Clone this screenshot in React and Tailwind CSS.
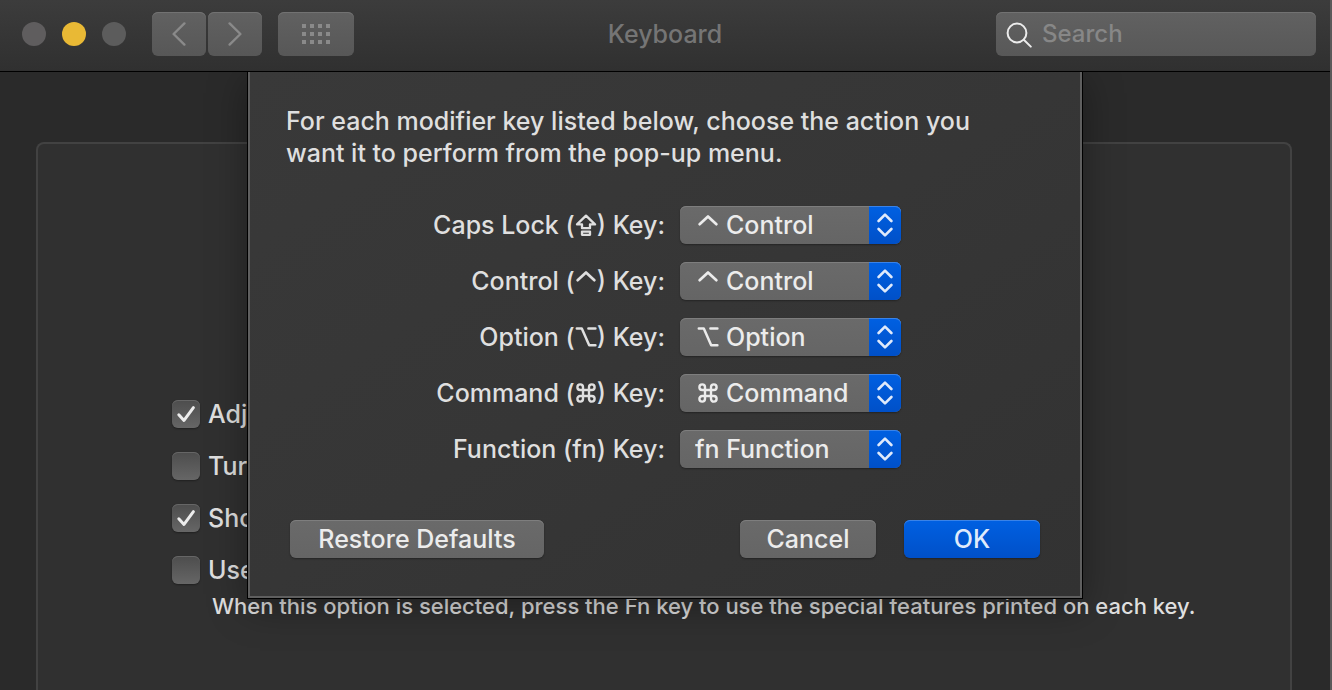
import { useState } from "react";

const stroke = {
  fill: "none",
  stroke: "currentColor",
  strokeLinecap: "round",
  strokeLinejoin: "round",
};

function Glyph({ name, className = "" }) {
  return (
    <svg viewBox="0 0 22 22" className={`h-[22px] w-[22px] ${className}`} aria-hidden="true" {...stroke}>
      {name === "caps" && (
        <g strokeWidth="2.3">
          <path d="M11 1.6 20 10.4H15V14.2H7V10.4H2Z" />
          <rect x="7" y="17.6" width="8" height="3.2" />
        </g>
      )}
      {name === "control" && <path strokeWidth="2.7" d="M2.6 10.2 11 2.4 19.4 10.2" />}
      {name === "option" && (
        <path strokeWidth="2.5" d="M1.8 2.6H6.8L14.2 19.2H20.4M13.4 2.6H20.4" />
      )}
      {name === "command" && (
        <path
          strokeWidth="2.4"
          d="M8 8H14V14H8ZM8 8H5.2A2.8 2.8 0 1 1 8 5.2ZM14 8V5.2A2.8 2.8 0 1 1 16.8 8ZM14 14H16.8A2.8 2.8 0 1 1 14 16.8ZM8 14V16.8A2.8 2.8 0 1 1 5.2 14Z"
        />
      )}
    </svg>
  );
}

const actions = [
  { id: "caps", label: "Caps Lock" },
  { id: "control", label: "Control" },
  { id: "option", label: "Option" },
  { id: "command", label: "Command" },
  { id: "function", label: "fn Function" },
];

const keys = [
  { id: "caps", name: "Caps Lock", action: "control" },
  { id: "control", name: "Control", action: "control" },
  { id: "option", name: "Option", action: "option" },
  { id: "command", name: "Command", action: "command" },
  { id: "function", name: "Function", action: "function" },
];

const settings = [
  { id: "brightness", label: "Adj", title: "Adjust keyboard brightness in low light", on: true },
  { id: "backlight", label: "Turn", title: "Turn keyboard backlight off after inactivity", on: false },
  { id: "viewers", label: "Show", title: "Show keyboard and emoji viewers in menu bar", on: true },
  { id: "fkeys", label: "Use", title: "Use F1, F2, etc. keys as standard function keys", on: false },
];

function ModifierRow({ item }) {
  const [value, setValue] = useState(item.action);
  const isFn = value === "function";
  return (
    <div className="grid grid-cols-[379px_221px] items-center gap-[15px]">
      <label htmlFor={`key-${item.id}`} className="flex items-center justify-end whitespace-pre">
        {item.name} (
        {item.id === "function" ? "fn" : <Glyph name={item.id} />}
        ) Key:
      </label>
      <div className="relative h-[38px] text-[#ececec]">
        <select
          id={`key-${item.id}`}
          value={value}
          onChange={(e) => setValue(e.target.value)}
          className={`h-full w-full appearance-none rounded-md bg-linear-to-b from-[#6a6a6a] to-[#656565] shadow-[0_1px_2px_rgba(0,0,0,0.35),inset_0_1px_0_#7e7e7e] outline-none ${isFn ? "pl-[15px]" : "pl-[46px]"}`}
        >
          {actions.map((a) => (
            <option key={a.id} value={a.id}>
              {a.label}
            </option>
          ))}
        </select>
        {!isFn && <Glyph name={value} className="pointer-events-none absolute top-2 left-[17px]" />}
        <span className="pointer-events-none absolute top-0 right-0 flex h-full w-8 items-center justify-center rounded-r-md bg-linear-to-b from-[#0060e2] to-[#0050c8] text-[#dfeafb] shadow-[inset_0_1px_0_#3a83e8]">
          <svg viewBox="0 0 16 26" className="h-[26px] w-4" strokeWidth="2.6" aria-hidden="true" {...stroke}>
            <path d="M1.6 9 8 2.6 14.4 9M1.6 17 8 23.4 14.4 17" />
          </svg>
        </span>
      </div>
    </div>
  );
}

function Setting({ item }) {
  const [on, setOn] = useState(item.on);
  return (
    <label className="flex h-7 items-center gap-2 whitespace-nowrap">
      <span className="relative size-7 shrink-0">
        <input
          type="checkbox"
          aria-label={item.title}
          checked={on}
          onChange={() => setOn(!on)}
          className="block size-7 appearance-none rounded-md bg-linear-to-b from-[#4d4d4d] to-[#666666] shadow-[0_1px_2px_rgba(0,0,0,0.35),inset_0_1px_0_#666666]"
        />
        {on && (
          <svg viewBox="0 0 28 28" className="pointer-events-none absolute inset-0 size-7 text-[#ececec]" strokeWidth="3" aria-hidden="true" {...stroke}>
            <path d="M6.8 14.8 12 20.4 21.4 7.6" />
          </svg>
        )}
      </span>
      {item.label}
    </label>
  );
}

const navButton =
  "flex h-11 items-center justify-center rounded-md bg-linear-to-b from-[#616161] to-[#575757] text-[#8a8a8a] shadow-[inset_0_1px_0_#727272]";
const pushButton =
  "h-[38px] rounded-md bg-linear-to-b from-[#6a6a6a] to-[#656565] text-[#ececec] shadow-[0_1px_2px_rgba(0,0,0,0.35),inset_0_1px_0_#7e7e7e]";

function Toolbar() {
  return (
    <header className="grid h-[72px] grid-cols-[1fr_auto_1fr] items-center border-b border-black bg-linear-to-b from-[#3c3c3c] to-[#303030] px-3.5 pb-[3px]">
      <div className="flex items-center pl-2">
        <div className="flex gap-4">
          <button aria-label="Close" className="size-6 rounded-full bg-[#5f5d5e]" />
          <button aria-label="Minimize" className="size-6 rounded-full bg-[#e9b935]" />
          <button aria-label="Zoom" className="size-6 rounded-full bg-[#5c5c5c]" />
        </div>
        <div className="ml-[26px] flex gap-0.5">
          <button aria-label="Back" className={`${navButton} w-[54px]`}>
            <svg viewBox="0 0 14 24" className="h-6 w-3.5" strokeWidth="2.4" aria-hidden="true" {...stroke}>
              <path d="M12.4 1.4 1.6 12 12.4 22.6" />
            </svg>
          </button>
          <button aria-label="Forward" className={`${navButton} w-[54px]`}>
            <svg viewBox="0 0 14 24" className="h-6 w-3.5" strokeWidth="2.4" aria-hidden="true" {...stroke}>
              <path d="M1.6 1.4 12.4 12 1.6 22.6" />
            </svg>
          </button>
        </div>
        <button aria-label="Show All" className={`${navButton} ml-4 w-[76px]`}>
          <svg viewBox="0 0 28 20" className="h-5 w-7" fill="currentColor" aria-hidden="true">
            {[0, 8, 16].map((y) =>
              [0, 8, 16, 24].map((x) => <rect key={`${x}-${y}`} x={x} y={y} width="4" height="4" />)
            )}
          </svg>
        </button>
      </div>
      <h1 className="text-[#757575]">Keyboard</h1>
      <div className="relative w-80 justify-self-end">
        <input
          type="search"
          aria-label="Search"
          placeholder="Search"
          className="block h-11 w-full rounded-md bg-linear-to-b from-[#616161] to-[#585858] pr-3 pb-0.5 pl-[46px] text-2xl text-[#ececec] shadow-[inset_0_1px_0_#727272] outline-none placeholder:text-[#878787]"
        />
        <svg viewBox="0 0 26 26" className="pointer-events-none absolute top-2.5 left-2.5 size-[26px] text-[#ececec]" strokeWidth="2" aria-hidden="true" {...stroke}>
          <circle cx="11" cy="11" r="9.4" />
          <path d="M17.8 17.8 24.8 24.6" />
        </svg>
      </div>
    </header>
  );
}

function ModifierSheet() {
  return (
    <div className="absolute inset-x-0 top-0 flex justify-center">
      <section
        role="dialog"
        aria-label="Modifier Keys"
        className="w-[836px] border border-t-0 border-black shadow-[0_8px_36px_rgba(0,0,0,0.35)]"
      >
        <div className="border-2 border-t-0 border-[#5f5f5f] bg-linear-to-br from-[#393939] via-[#363636] to-[#323232] pt-[33px] pr-10 pb-[38px] pl-9">
          <p className="leading-8">
            For each modifier key listed below, choose the action you
            <br />
            want it to perform from the pop-up menu.
          </p>
          <div className="mt-[37px] flex flex-col gap-[18px]">
            {keys.map((k) => (
              <ModifierRow key={k.id} item={k} />
            ))}
          </div>
          <div className="mt-[52px] flex gap-7 pl-1">
            <button className={`${pushButton} mr-auto w-[254px]`}>Restore Defaults</button>
            <button className={`${pushButton} w-[136px]`}>Cancel</button>
            <button className="h-[38px] w-[136px] rounded-md bg-linear-to-b from-[#0060e2] to-[#0050c8] text-[#dfeafb] shadow-[0_1px_2px_rgba(0,0,0,0.35),inset_0_1px_0_#3a83e8]">
              OK
            </button>
          </div>
        </div>
      </section>
    </div>
  );
}

export default function App() {
  return (
    <div className="flex h-screen flex-col overflow-hidden border-r-2 border-[#5a5a5a] bg-[#2a2a2a] font-['Inter',sans-serif] text-[25px] leading-8 font-medium text-[#dfdfdf]">
      <Toolbar />
      <main className="relative flex flex-1 flex-col overflow-hidden pt-[70px] pr-[38px] pl-9">
        <div className="flex-1 rounded-t-lg border-2 border-b-0 border-[#424242] bg-[#303030] pt-64 pl-[134px]">
          <div className="flex flex-col gap-6">
            {settings.map((s) => (
              <Setting key={s.id} item={s} />
            ))}
          </div>
          <p className="mt-1.5 pl-10 text-[22px] whitespace-nowrap">
            When this option is selected, press the Fn key to use the special features printed on each key.
          </p>
        </div>
        <ModifierSheet />
      </main>
    </div>
  );
}
